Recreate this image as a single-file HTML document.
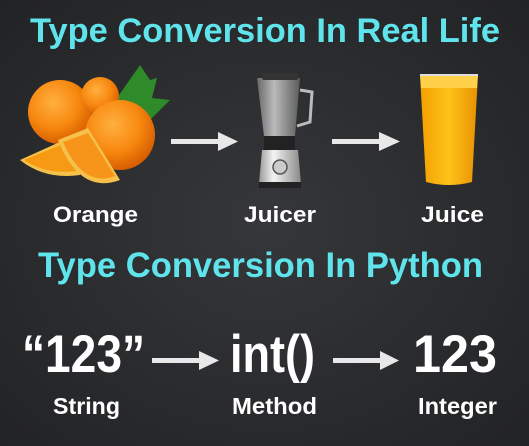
<!DOCTYPE html>
<html><head><meta charset="utf-8"><style>
html,body{margin:0;padding:0;background:#2c2e30;}
svg{display:block}
</style></head><body>
<svg width="529" height="446" viewBox="0 0 529 446" xmlns="http://www.w3.org/2000/svg" font-family="Liberation Sans, sans-serif" font-weight="bold">
<defs>
<radialGradient id="bg" cx="50%" cy="50%" r="70%"><stop offset="0" stop-color="#35373a"/><stop offset="1" stop-color="#222325"/></radialGradient>
<radialGradient id="or" cx="40%" cy="35%" r="65%"><stop offset="0" stop-color="#ffb040"/><stop offset="0.6" stop-color="#f7880f"/><stop offset="1" stop-color="#d85f00"/></radialGradient>
<linearGradient id="ju" x1="0" y1="0" x2="1" y2="0"><stop offset="0" stop-color="#f2a000"/><stop offset="0.5" stop-color="#ffc21a"/><stop offset="1" stop-color="#e89000"/></linearGradient>
<linearGradient id="gl" x1="0" y1="0" x2="1" y2="0"><stop offset="0" stop-color="#777"/><stop offset="0.4" stop-color="#ddd"/><stop offset="1" stop-color="#666"/></linearGradient>
<linearGradient id="mt" x1="0" y1="0" x2="1" y2="0"><stop offset="0" stop-color="#999"/><stop offset="0.35" stop-color="#f4f4f4"/><stop offset="1" stop-color="#888"/></linearGradient>
</defs>
<rect width="529" height="446" fill="url(#bg)"/>
<g fill="#5fe4ec">
<text x="30" y="42" font-size="34" textLength="470" lengthAdjust="spacingAndGlyphs">Type Conversion In Real Life</text>
<text x="38" y="277" font-size="35" textLength="445" lengthAdjust="spacingAndGlyphs">Type Conversion In Python</text>
</g>
<!-- oranges -->
<path d="M110 108 L140 65 L150 80 L157 78 L152 98 L170 100 L150 120 Z" fill="#2f8a2a"/>
<circle cx="60" cy="112" r="32" fill="url(#or)"/>
<circle cx="100" cy="96" r="19" fill="url(#or)"/>
<circle cx="120" cy="135" r="35" fill="url(#or)"/>
<path d="M20 160 L82 132 L80 175 Q45 180 20 160Z" fill="#f6c14a"/>
<path d="M24 160 L80 137 L77 171 Q46 175 24 160Z" fill="#f59a12"/>
<path d="M58 140 L88 128 L120 180 Q80 195 58 140Z" fill="#f6c14a"/>
<path d="M63 142 L88 133 L115 176 Q83 188 63 142Z" fill="#f7951a"/>
<!-- arrows -->
<g fill="#e8e8e8">
<rect x="171" y="139" width="50" height="5"/><path d="M218 132 L238 141.5 L218 151 Z"/>
<rect x="332" y="139" width="50" height="5"/><path d="M379 132 L400 141.5 L379 151 Z"/>
<rect x="152" y="358" width="50" height="5"/><path d="M199 351 L219 360.5 L199 370 Z"/>
<rect x="333" y="358" width="50" height="5"/><path d="M380 351 L399 360.5 L380 370 Z"/>
</g>
<!-- blender -->
<path d="M257 78 L300 78 L295 136 L264 136 Z" fill="url(#gl)" opacity="0.8"/>
<path d="M300 90 L312 92 L310 122 L297 126" fill="none" stroke="#bbb" stroke-width="3"/>
<rect x="262" y="73" width="36" height="7" rx="2" fill="#333"/>
<rect x="264" y="136" width="31" height="14" fill="#222"/>
<path d="M262 150 L298 150 L301 184 L259 184 Z" fill="url(#mt)"/>
<circle cx="280" cy="167" r="7" fill="#ccc" stroke="#555" stroke-width="1.5"/>
<rect x="259" y="182" width="42" height="6" fill="#222"/>
<!-- juice -->
<path d="M420 75 L478 75 L472 182 Q449 188 426 182 Z" fill="url(#ju)"/>
<path d="M420 75 L478 75 L477 88 L421 88 Z" fill="#ffd04a"/>
<path d="M420 75 L478 75" stroke="#ddd" stroke-width="2"/>
<g fill="#ffffff">
<text x="53" y="222" font-size="22" textLength="85" lengthAdjust="spacingAndGlyphs">Orange</text>
<text x="244" y="222" font-size="22" textLength="72" lengthAdjust="spacingAndGlyphs">Juicer</text>
<text x="421" y="222" font-size="22" textLength="63" lengthAdjust="spacingAndGlyphs">Juice</text>
<text x="22" y="372" font-size="53" textLength="123" lengthAdjust="spacingAndGlyphs">“123”</text>
<text x="230" y="372" font-size="53" textLength="85" lengthAdjust="spacingAndGlyphs">int()</text>
<text x="413" y="372" font-size="53" textLength="84" lengthAdjust="spacingAndGlyphs">123</text>
<text x="53" y="414" font-size="23" textLength="67" lengthAdjust="spacingAndGlyphs">String</text>
<text x="232" y="414" font-size="23" textLength="85" lengthAdjust="spacingAndGlyphs">Method</text>
<text x="418" y="414" font-size="23" textLength="79" lengthAdjust="spacingAndGlyphs">Integer</text>
</g>
</svg>
</body></html>
